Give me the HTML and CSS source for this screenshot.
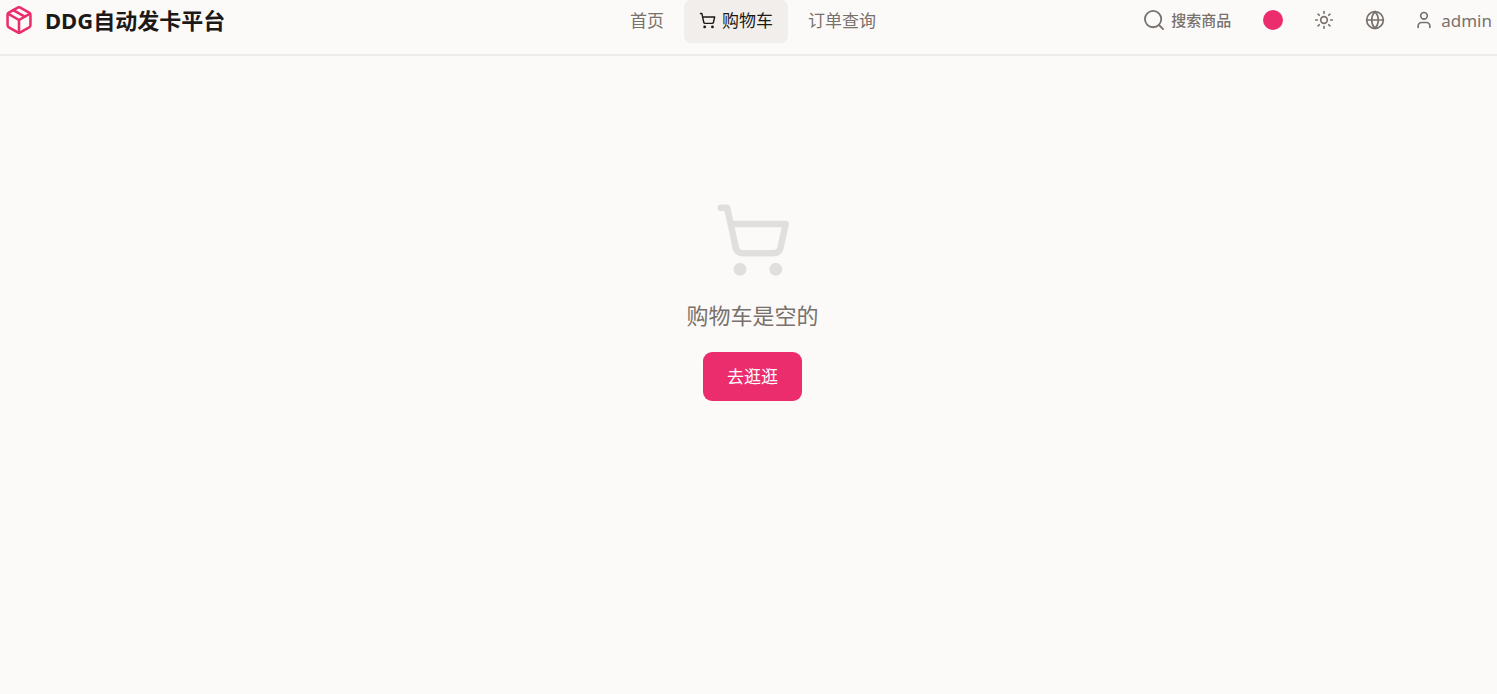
FILE: index.html
```
<!DOCTYPE html>
<html lang="zh-CN">

<head>
    <meta charset="UTF-8">
    <meta name="viewport" content="width=device-width, initial-scale=1.0">
    <title>购物车 - DDG自动发卡平台</title>
    <link rel="stylesheet" href="styles.css">
</head>

<body>
    <header class="header">
        <a href="#" class="brand">
            <svg class="brand-icon" viewBox="2 1 20 22">
                <path d="M11 21.73a2 2 0 0 0 2 0l7-4A2 2 0 0 0 21 16V8a2 2 0 0 0-1-1.73l-7-4a2 2 0 0 0-2 0l-7 4A2 2 0 0 0 3 8v8a2 2 0 0 0 1 1.73z" />
                <path d="M12 22V12" />
                <path d="M3.3 7 12 12l8.7-5" />
                <path d="m7.5 4.27 9 5.15" />
            </svg>
            <span>DDG自动发卡平台</span>
        </a>

        <nav class="nav">
            <a href="#" class="nav-link">首页</a>
            <a href="#" class="nav-link active">
                <svg class="nav-icon" viewBox="0 0 24 24">
                    <circle cx="8" cy="21" r="1" />
                    <circle cx="19" cy="21" r="1" />
                    <path d="M2.05 2.05h2l2.66 12.42a2 2 0 0 0 2 1.58h9.78a2 2 0 0 0 1.95-1.57l1.65-7.43H5.12" />
                </svg>
                购物车
            </a>
            <a href="#" class="nav-link">订单查询</a>
        </nav>

        <div class="actions">
            <button type="button" class="search">
                <svg class="search-icon" viewBox="1 1 22 22">
                    <circle cx="11" cy="11" r="9" />
                    <path d="m22 22-4.5-4.5" />
                </svg>
                搜索商品
            </button>
            <button type="button" class="icon-btn" aria-label="主题颜色"><span class="dot"></span></button>
            <button type="button" class="icon-btn" aria-label="切换主题">
                <svg class="icon" viewBox="0 0 24 24">
                    <circle cx="12" cy="12" r="4" />
                    <path d="M12 2v2M12 20v2M4.93 4.93l1.41 1.41M17.66 17.66l1.41 1.41M2 12h2M20 12h2M6.34 17.66l-1.41 1.41M19.07 4.93l-1.41 1.41" />
                </svg>
            </button>
            <button type="button" class="icon-btn" aria-label="语言">
                <svg class="icon" viewBox="0 0 24 24">
                    <circle cx="12" cy="12" r="10" />
                    <path d="M12 2a14.5 14.5 0 0 0 0 20 14.5 14.5 0 0 0 0-20" />
                    <path d="M2 12h20" />
                </svg>
            </button>
            <button type="button" class="user">
                <svg class="icon" viewBox="0 0 24 24">
                    <path d="M19 21v-2a4 4 0 0 0-4-4H9a4 4 0 0 0-4 4v2" />
                    <circle cx="12" cy="7" r="4" />
                </svg>
                admin
            </button>
        </div>
    </header>

    <main class="empty">
        <svg class="empty-icon" viewBox="0 0 24 24">
            <circle cx="8" cy="21" r="1" />
            <circle cx="19" cy="21" r="1" />
            <path d="M2.05 2.05h2l2.66 12.42a2 2 0 0 0 2 1.58h9.78a2 2 0 0 0 1.95-1.57l1.65-7.43H5.12" />
        </svg>
        <p class="empty-text">购物车是空的</p>
        <a href="#" class="shop-btn">去逛逛</a>
    </main>
</body>

</html>
```
FILE: styles.css
```
body {
    margin: 0;
    background-color: #fcfaf9;
    color: #78716c;
    font-family: "Noto Sans", "Noto Sans CJK SC", sans-serif;
    font-size: 17px;
    line-height: 25px;
}

a {
    color: inherit;
    text-decoration: none;
}

button {
    padding: 0;
    border: none;
    background: none;
    color: inherit;
    font: inherit;
    cursor: pointer;
}

svg {
    flex: none;
    fill: none;
    stroke: currentColor;
    stroke-width: 2;
    stroke-linecap: round;
    stroke-linejoin: round;
}

/* header */
.header {
    display: grid;
    grid-template-columns: 1fr auto 1fr;
    align-items: start;
    padding: 0 5px 11px 6px;
    border-bottom: 2px solid #eeecea;
}

.brand {
    display: flex;
    align-items: center;
    gap: 13px;
    height: 40px;
    color: #1c1917;
    font-size: 22px;
    font-weight: 700;
    white-space: nowrap;
}

.brand-icon {
    width: 26px;
    height: 28px;
    color: #eb2d6e;
}

.nav {
    display: flex;
    gap: 5px;
    padding-left: 8px;
}

.nav-link {
    display: flex;
    align-items: center;
    gap: 6px;
    height: 43px;
    padding: 0 15px 2px;
    border-radius: 7px;
    box-sizing: border-box;
    white-space: nowrap;
}

.nav-link:hover,
.nav-link.active {
    background-color: #f1eeec;
    color: #1c1917;
}

.nav-icon {
    width: 17px;
    height: 17px;
}

.actions {
    display: flex;
    justify-content: flex-end;
    gap: 10px;
}

.search,
.user,
.icon-btn {
    display: flex;
    align-items: center;
    height: 40px;
    white-space: nowrap;
}

.search {
    gap: 7px;
    padding-right: 11px;
    font-size: 15px;
    font-weight: 500;
}

.search-icon {
    width: 20px;
    height: 20px;
}

.icon-btn {
    justify-content: center;
    width: 41px;
}

.icon {
    width: 20px;
    height: 20px;
}

.dot {
    width: 20px;
    height: 20px;
    border-radius: 50%;
    background-color: #eb2d6e;
}

.user {
    gap: 7px;
    padding-left: 9px;
}

/* empty cart */
.empty {
    display: flex;
    flex-direction: column;
    align-items: center;
    padding: 145px 0 0 8px;
}

.empty-icon {
    width: 78px;
    height: 78px;
    color: #e1dfde;
}

.empty-text {
    margin: 20px 0;
    font-size: 22px;
    line-height: 33px;
}

.shop-btn {
    padding: 12px 24px;
    border-radius: 9px;
    background-color: #eb2d6e;
    color: white;
}
```
